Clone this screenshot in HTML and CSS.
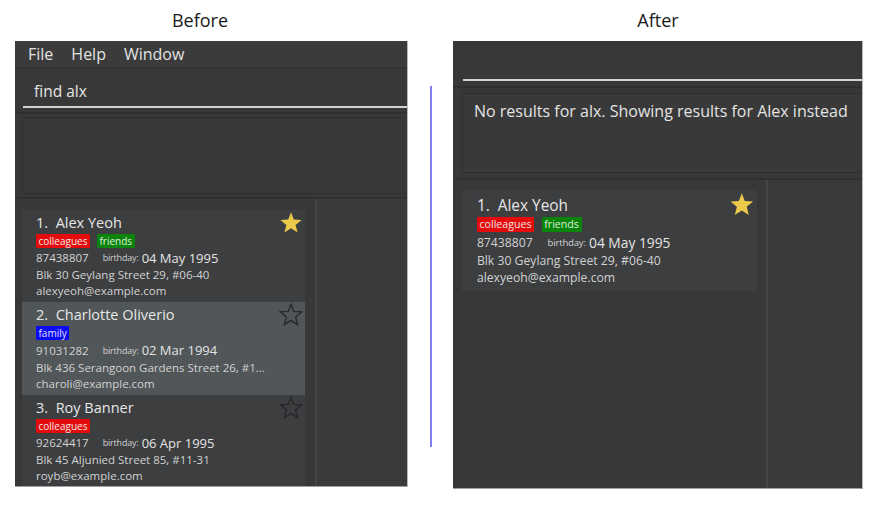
FILE: index.html
```html
<!DOCTYPE html>
<html>
<head>
<meta charset="utf-8">
<link rel="stylesheet" href="styles.css">
</head>
<body>
<div class="page">
  <section class="col col-before">
    <h2 class="title title-before">Before</h2>
    <div class="app app-before">
      <div class="menubar"><span>File</span><span>Help</span><span>Window</span></div>
      <div class="command"><div class="cmd-input">find alx</div></div>
      <div class="result"><div class="result-box"></div></div>
      <div class="list-area">
        <div class="list">
          <div class="card">
            <div class="info">
              <div class="name">1.&nbsp; Alex Yeoh</div>
              <div class="tags"><span class="tag red">colleagues</span><span class="tag green">friends</span></div>
              <div class="row"><span class="phone">87438807</span><span class="bday">birthday:</span><span class="date">04 May 1995</span></div>
              <div class="row addr"><span class="txt">Blk 30 Geylang Street 29, #06-40</span></div>
              <div class="row"><span class="txt">alexyeoh@example.com</span></div>
            </div>
            <svg class="star" viewBox="0 0 24 24"><polygon class="fill" points="12,1.2 14.8,8.4 22.6,8.9 16.6,13.9 18.6,21.6 12,17.3 5.4,21.6 7.4,13.9 1.4,8.9 9.2,8.4"/></svg>
          </div>
          <div class="card selected">
            <div class="info">
              <div class="name">2.&nbsp; Charlotte Oliverio</div>
              <div class="tags"><span class="tag blue">family</span></div>
              <div class="row"><span class="phone">91031282</span><span class="bday">birthday:</span><span class="date">02 Mar 1994</span></div>
              <div class="row addr"><span class="txt">Blk 436 Serangoon Gardens Street 26, #1...</span></div>
              <div class="row"><span class="txt">charoli@example.com</span></div>
            </div>
            <svg class="star" viewBox="0 0 24 24"><polygon class="outline" points="12,1.2 14.8,8.4 22.6,8.9 16.6,13.9 18.6,21.6 12,17.3 5.4,21.6 7.4,13.9 1.4,8.9 9.2,8.4"/></svg>
          </div>
          <div class="card">
            <div class="info">
              <div class="name">3.&nbsp; Roy Banner</div>
              <div class="tags"><span class="tag red">colleagues</span></div>
              <div class="row"><span class="phone">92624417</span><span class="bday">birthday:</span><span class="date">06 Apr 1995</span></div>
              <div class="row addr"><span class="txt">Blk 45 Aljunied Street 85, #11-31</span></div>
              <div class="row"><span class="txt">royb@example.com</span></div>
            </div>
            <svg class="star" viewBox="0 0 24 24"><polygon class="outline" points="12,1.2 14.8,8.4 22.6,8.9 16.6,13.9 18.6,21.6 12,17.3 5.4,21.6 7.4,13.9 1.4,8.9 9.2,8.4"/></svg>
          </div>
        </div>
        <div class="side"></div>
      </div>
    </div>
  </section>

  <div class="divider"></div>

  <section class="col col-after">
    <h2 class="title">After</h2>
    <div class="app app-after">
      <div class="command"><div class="cmd-input"></div></div>
      <div class="result"><div class="result-box"><span class="result-text">No results for alx. Showing results for Alex instead</span></div></div>
      <div class="list-area">
        <div class="list">
          <div class="card">
            <div class="info">
              <div class="name">1.&nbsp; Alex Yeoh</div>
              <div class="tags"><span class="tag red">colleagues</span><span class="tag green">friends</span></div>
              <div class="row"><span class="phone">87438807</span><span class="bday">birthday:</span><span class="date">04 May 1995</span></div>
              <div class="row addr"><span class="txt">Blk 30 Geylang Street 29, #06-40</span></div>
              <div class="row"><span class="txt">alexyeoh@example.com</span></div>
            </div>
            <svg class="star" viewBox="0 0 24 24"><polygon class="fill" points="12,1.2 14.8,8.4 22.6,8.9 16.6,13.9 18.6,21.6 12,17.3 5.4,21.6 7.4,13.9 1.4,8.9 9.2,8.4"/></svg>
          </div>
        </div>
        <div class="side"></div>
      </div>
    </div>
  </section>
</div>
</body>
</html>
```

FILE: styles.css
```css
* { box-sizing: border-box; }

body {
  margin: 0;
  background: #ffffff;
  font-family: "Open Sans", "Noto Sans", "DejaVu Sans", sans-serif;
}

.page {
  display: flex;
  align-items: flex-start;
  padding-left: 15px;
  width: 875px;
  height: 511px;
}

.col { display: flex; flex-direction: column; }
.col-before { width: 393px; }
.col-after { width: 410px; }

.title {
  margin: 0;
  height: 41px;
  line-height: 40px;
  font-size: 18px;
  font-weight: 400;
  color: #1a1a1a;
  text-align: center;
}
.title-before { padding-right: 23px; }

.divider {
  width: 2px;
  height: 361px;
  margin: 86px 21px 0 22px;
  background: #8080ff;
}

.app {
  display: flex;
  flex-direction: column;
  background: #383838;
  overflow: hidden;
  border-bottom: 1px solid #a0a0a0;
  border-right: 1px solid #b8b8b8;
}
.app-before { height: 446px; }
.app-after { height: 448px; }

/* menu */
.menubar {
  height: 27px;
  display: flex;
  align-items: center;
  gap: 18px;
  padding: 0 0 1px 13px;
  background: #3b3b3b;
  border-bottom: 1px solid #303030;
  font-size: 16px;
  color: #e2e2e2;
}

/* command box */
.command {
  height: 44px;
  padding-left: 8px;
  background: #383838;
}
.app-after .command { height: 45px; padding-left: 10px; }
.cmd-input {
  height: 40px;
  padding: 14px 0 0 11px;
  border-bottom: 2px solid #d2d2d2;
  font-size: 15.5px;
  line-height: 18px;
  color: #e6e6e6;
}

/* result display */
.result {
  height: 85px;
  padding: 3px 0 0 7px;
  border-top: 2px solid #2f2f2f;
  background: #383838;
}
.app-after .result { height: 92px; padding: 5px 0 0 9px; }
.result-box {
  height: 77px;
  border: 1px solid #2e2e2e;
  border-right: none;
  background: #393939;
}
.app-after .result-box { height: 80px; padding: 6px 0 0 11px; }
.result-text {
  font-size: 16px;
  line-height: 20px;
  color: #e4e4e4;
  white-space: nowrap;
}

/* list */
.list-area {
  flex: 1;
  display: flex;
  min-height: 0;
  border-top: 2px solid #303030;
  background: #3a3a3a;
}
.list {
  display: flex;
  flex-direction: column;
  background: #383838;
  border-right: 2px solid #454545;
}
.app-before .list { width: 302px; padding: 11px 0 0 7px; }
.app-after .list { width: 315px; padding: 10px 0 0 9px; }
.side { flex: 1; background: #3a3a3a; }

.card {
  display: flex;
  justify-content: space-between;
  align-items: flex-start;
  flex-shrink: 0;
  font-size: 16px;
  padding: 0 0.0625em 0 0.875em;
  background: #3c3e40;
  color: #d2d2d2;
}
.app-before .card { width: 283px; }
.app-after .card { width: 295px; font-size: 17px; }
.card.selected { background: #515658; }

.info { padding: 0.25em 0 0.22em; }
.app-after .info { padding: 0.33em 0 0.3em; }

.name {
  font-size: 0.90625em;
  line-height: 1.24;
  height: 1.24em;
  color: #e6e6e6;
  white-space: nowrap;
}

.tags {
  display: flex;
  gap: 0.4375em;
  margin-top: 0.125em;
  height: 0.875em;
}
.tag {
  font-size: 0.625em;
  line-height: 1.4;
  padding: 0 0.25em;
  color: #f2e6e6;
  border-radius: 1px;
}
.tag.red { background: #e30b0b; }
.tag.green { background: #0a840a; color: #dff0df; }
.tag.blue { background: #0a0af5; color: #e0e0ff; }

.row {
  height: 1em;
  display: flex;
  align-items: center;
  white-space: nowrap;
}
.tags + .row { margin-top: 0.125em; }
.row.addr { margin-top: 0.0625em; }

.phone { font-size: 0.71875em; margin-right: 1.22em; }
.bday { font-size: 0.5625em; margin-right: 0.34em; letter-spacing: -0.02em; }
.date { font-size: 0.8125em; color: #e4e4e4; }
.txt { font-size: 0.71875em; }

.star {
  width: 1.625em;
  height: 1.5em;
  margin-top: 0.0625em;
  flex-shrink: 0;
}
.app-after .star { margin-top: 0.125em; }
.star .fill { fill: #ecc94a; }
.star .outline { fill: none; stroke: #27282a; stroke-width: 1.4; }
```
